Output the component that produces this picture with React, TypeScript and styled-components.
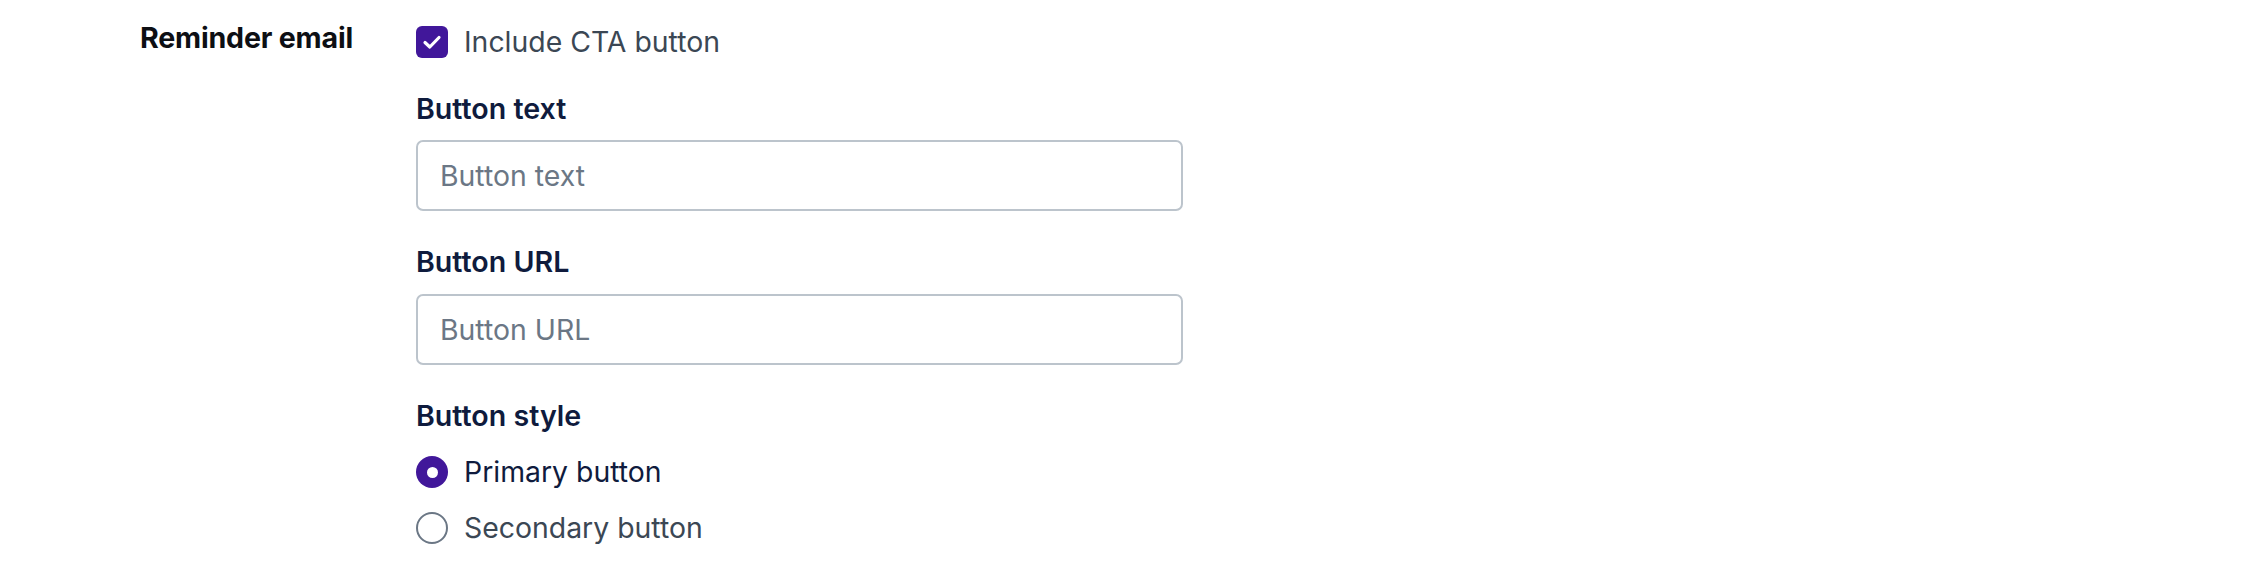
import React from "react";
import styled, { createGlobalStyle } from "styled-components";

const Global = createGlobalStyle`
  html, body { margin: 0; padding: 0; background: #ffffff; }
  body { font-family: Inter, "Noto Sans", sans-serif; -webkit-font-smoothing: antialiased; }
  * { box-sizing: border-box; }
`;

const Page = styled.div`
  display: grid;
  grid-template-columns: 276px 767px;
  padding: 17px 0 0 140px;
  width: 2266px;
  height: 568px;
`;

const SectionLabel = styled.div`
  font-size: 28.6px;
  line-height: 42px;
  font-weight: 700;
  color: #0d0f14;
  letter-spacing: -0.2px;
`;

const Fields = styled.div`
  display: flex;
  flex-direction: column;
  padding-top: 4px;
`;

const OptionRow = styled.label<{ $mb?: number }>`
  display: flex;
  align-items: center;
  gap: 16px;
  height: 42px;
  margin-bottom: ${(p) => p.$mb ?? 0}px;
`;

const Checkbox = styled.span`
  width: 32px;
  height: 32px;
  border-radius: 6px;
  background: #41179a;
  display: flex;
  align-items: center;
  justify-content: center;
  flex-shrink: 0;
`;

const Radio = styled.span<{ $checked?: boolean }>`
  width: 32px;
  height: 32px;
  border-radius: 50%;
  flex-shrink: 0;
  background: ${(p) => (p.$checked ? "#41179a" : "#ffffff")};
  border: ${(p) => (p.$checked ? "none" : "2px solid #6b7785")};
  display: flex;
  align-items: center;
  justify-content: center;
  &::after {
    content: "";
    display: ${(p) => (p.$checked ? "block" : "none")};
    width: 11px;
    height: 11px;
    border-radius: 50%;
    background: #ffffff;
  }
`;

const OptionText = styled.span<{ $dark?: boolean }>`
  font-size: 28.4px;
  line-height: 42px;
  font-weight: 400;
  color: ${(p) => (p.$dark ? "#0f1b3d" : "#3b4754")};
`;

const FieldGroup = styled.div<{ $mt: number }>`
  display: flex;
  flex-direction: column;
  margin-top: ${(p) => p.$mt}px;
`;

const FieldLabel = styled.div<{ $mb: number }>`
  font-size: 28.6px;
  line-height: 42px;
  font-weight: 600;
  color: #0f1b3d;
  margin-bottom: ${(p) => p.$mb}px;
`;

const TextInput = styled.input`
  width: 767px;
  height: 71px;
  border: 2px solid #bcc4cc;
  border-radius: 7px;
  padding: 0 22px;
  font-family: Inter, "Noto Sans", sans-serif;
  font-size: 28.4px;
  color: #0f1b3d;
  background: #ffffff;
  outline: none;
  &::placeholder {
    color: #6b7785;
  }
`;

export default function App() {
  return (
    <>
      <Global />
      <Page>
        <SectionLabel>Reminder email</SectionLabel>
        <Fields>
          <OptionRow>
            <Checkbox>
              <svg width="22" height="22" viewBox="0 0 22 22" fill="none">
                <path
                  d="M4 11.5 L8.8 16 L18 6.5"
                  stroke="#ffffff"
                  strokeWidth="3.2"
                  strokeLinecap="round"
                  strokeLinejoin="round"
                />
              </svg>
            </Checkbox>
            <OptionText>Include CTA button</OptionText>
          </OptionRow>

          <FieldGroup $mt={25}>
            <FieldLabel $mb={10}>Button text</FieldLabel>
            <TextInput placeholder="Button text" />
          </FieldGroup>

          <FieldGroup $mt={30}>
            <FieldLabel $mb={11}>Button URL</FieldLabel>
            <TextInput placeholder="Button URL" />
          </FieldGroup>

          <FieldGroup $mt={30}>
            <FieldLabel $mb={14}>Button style</FieldLabel>
            <OptionRow $mb={14}>
              <Radio $checked />
              <OptionText $dark>Primary button</OptionText>
            </OptionRow>
            <OptionRow>
              <Radio />
              <OptionText>Secondary button</OptionText>
            </OptionRow>
          </FieldGroup>
        </Fields>
      </Page>
    </>
  );
}
